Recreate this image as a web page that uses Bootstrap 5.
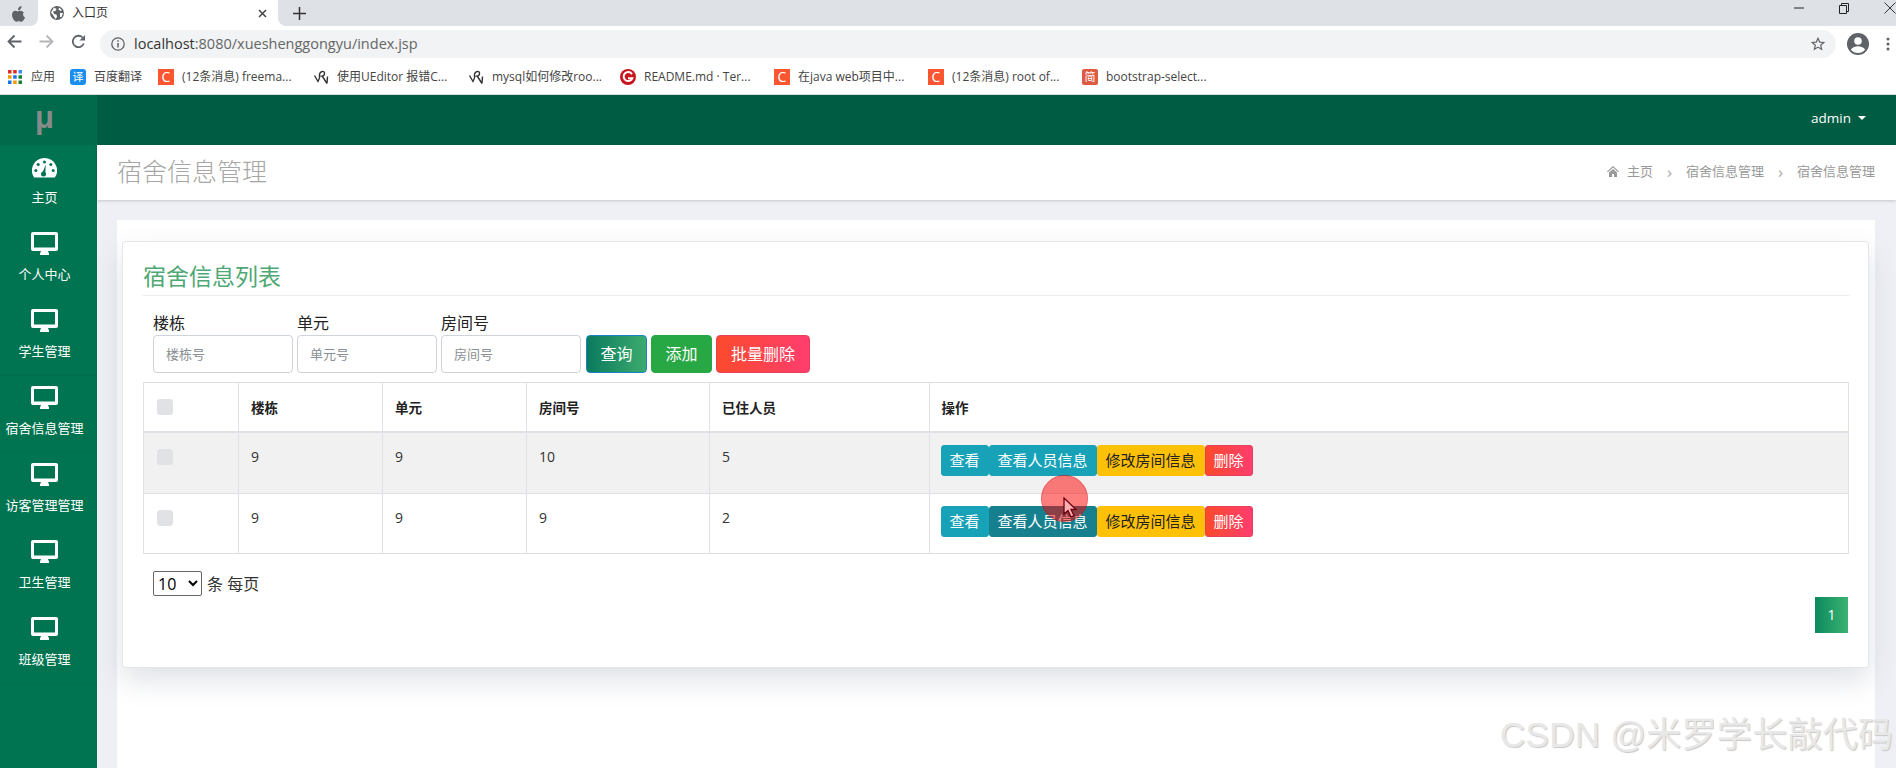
<!DOCTYPE html>
<html lang="zh"><head><meta charset="utf-8"><title>入口页</title>
<link href="https://cdn.jsdelivr.net/npm/bootstrap@5.3.0/dist/css/bootstrap.min.css" rel="stylesheet">
<style>
html,body{height:768px;overflow:hidden;}
body{font-family:"Open Sans","Noto Sans CJK SC",sans-serif;font-size:14px;color:#222;background:#fff;position:relative;width:1896px;}
.tabstrip{height:26px;background:#fff;}
.pinned{width:38px;background:#dee1e6;border-bottom-right-radius:8px;padding:2px 0 0 11px;}
.chrome-tab{width:240px;padding-left:12px;font-size:12px;color:#333;border-radius:8px 8px 0 0;}
.tab-rest{background:#dee1e6;border-bottom-left-radius:8px;padding-left:15px;}
.tab-title{margin-left:8px;width:186px;}
.winbtns{gap:35px;padding-right:0;margin-top:-10px;}
.toolbar{height:32px;padding-top:4px;}
.navicons{width:100px;padding:4px 0 0 7px;gap:17px;height:28px;}
.addr{width:1736px;height:28px;background:#f1f3f4;border-radius:14px;padding:0 11px 0 11px;font-size:14.5px;color:#666;}
.addr b{font-weight:400;color:#333;}
.addr-url{margin-left:9px;flex-grow:1;}
.tool-right{padding-left:11px;gap:17px;}
.bookbar{height:37px;padding-top:2px;border-bottom:1px solid #d6dcd9;display:grid;grid-template-columns:63px 88px 155px 155px 152px 154px 154px 154px auto;padding-left:7px;align-items:center;font-size:12px;color:#444;}
.bm{gap:8px;white-space:nowrap;}
.fav{width:16px;height:16px;color:#fff;font-size:11px;line-height:16px;text-align:center;flex:none;}
.fav-c{background:#fc5531;font-size:14px;}
.fav-y{background:#1a8df0;border-radius:3px;}
.fav-j{background:#dd5a43;border-radius:2px;}
.appheader{height:50px;background:#005c43;}
.logo-box{width:97px;padding-right:8px;background:#006a4b;color:#858c89;font-size:31px;font-weight:700;line-height:46px;text-align:center;font-family:"Liberation Sans",sans-serif;}
.admin{margin-left:auto;padding:0 30px 4px 0;color:#fff;font-size:13.5px;gap:7px;}
.caret-down{border-top:4px solid #fff;border-left:4px solid transparent;border-right:4px solid transparent;}
.workspace{height:623px;}
.sidebar{width:97px;background:#007450;flex:none;}
.side-item{height:77px;border-bottom:1px solid #006f4a;color:#fff;font-size:13px;text-align:center;padding:10px 8px 0 0;white-space:nowrap;}
.side-item svg{display:block;margin:0 auto;}
.side-item .side-label{display:block;line-height:20px;margin-top:9px;}
.side-home{padding-top:13px;}
.side-home .side-label{margin-top:9px;}
.mainarea{background:#eef0f5;flex-grow:1;min-width:0;}
.titlebar{height:55px;background:#fff;box-shadow:0 1px 3px rgba(0,0,0,.18);padding:0 21px 2px 20px;}
.pagetitle{font-size:25px;color:#a6a6a6;font-weight:300;margin:0;line-height:1;}
.crumbs{font-size:13px;color:#999;margin-left:auto;gap:0;}
.crumbs .sep{width:33px;text-align:center;color:#aaa;font-size:17px;line-height:1;}
.panel-wrap{margin:20px 21px 0 20px;background:#fff;padding:21px 6px 0 5px;height:548px;}
.listcard{border:1px solid #e4e6e8;border-radius:3px;box-shadow:0 12px 28px rgba(90,105,130,.2);padding:0 19px 34px 20px;height:427px;}
.listtitle{font-size:23px;line-height:30px;color:#4ea874;margin:19px 0 0;padding-bottom:4px;border-bottom:1px solid #e9ecef;font-weight:400;}
.filter{margin:16px 0 9px 10px;gap:4px;}
.fieldbox{width:140px;}
.fieldbox label{display:block;font-size:16px;line-height:24px;color:#222;margin:-1px 0 0;}
.fieldbox input{height:38px;font-size:13px;border-radius:4px;border-color:#ced4da;padding:0 12px;}
.fieldbox input::placeholder{color:#8a8f94;}
.btn-query{height:38px;width:61px;margin-left:1px;padding:0;font-size:16px;color:#fff;border:1px solid #1a82c4;border-radius:4px;background:linear-gradient(90deg,#0b7a5e,#3cab6f);}
.btn-add{height:38px;width:61px;padding:0;font-size:16px;border-radius:4px;background:#28a745;border-color:#28a745;color:#fff;}
.btn-hot{color:#fff;border:1px solid #e9405a;background:linear-gradient(90deg,#fb4a2c,#ff3d6e);}
.btn-batch{height:38px;width:94px;padding:0;font-size:16px;border-radius:4px;}
.gridtable{table-layout:fixed;width:1706px;margin:0;font-size:14px;border-color:#dee2e6;}
.gridtable th,.gridtable td{padding:13px 12px 0 12px;}
.gridtable th{height:49px;vertical-align:bottom;padding-bottom:12px;font-weight:700;color:#222;border-bottom:2px solid #dee2e6;font-size:13.5px;}
.gridtable td{height:61px;vertical-align:top;color:#333;line-height:21px;}
.gridtable .chk-cell{padding:16px 0 0 13px;vertical-align:top;line-height:0;}
.gridtable tr.row-shade td{background:#f1f1f1;height:62px;}
.gridtable tbody tr:last-child td{height:60px;}
.gridtable td.act-cell{padding:12px 12px 0 11px;}
.c1{width:95px}.c2,.c3{width:144px}.c4{width:183px}.c5{width:219.5px}
.fakechk{width:16px;height:16px;margin:0;background-color:#e0e2e5;border:0;border-radius:4px;opacity:1!important;}
.act{height:31px;padding:0 8px;font-size:15px;line-height:29px;border-radius:3px;font-weight:400;white-space:nowrap;}
.act-view{background:#17a2b8;border-color:#17a2b8;color:#fff;}
.act-dark{background:#17808f;border-color:#17808f;color:#fff;}
.act-edit{background:#ffc107;border-color:#ffc107;color:#222;}
.page-size{margin:17px 0 0 10px;font-size:16px;height:25px;gap:5px;color:#333;}
.page-size select{width:49px;height:25px;font-size:16px;padding:0;background:#fff;border:1px solid #666;border-radius:2px;}
.pager{margin:1px 1px 0 0;}
.pager .page-item .page-link{width:33px;height:36px;padding:0;line-height:36px;text-align:center;color:#fff;font-size:14px;border:0;border-radius:0;background:linear-gradient(90deg,#0b8a5e,#3cb371);}
.click-dot{position:absolute;left:1041px;top:475px;width:47px;height:47px;border-radius:50%;background:rgba(255,0,0,.5);border:1px solid rgba(190,0,0,.25);}
.click-arrow{position:absolute;left:1063px;top:497px;}
.watermark{position:absolute;left:1500px;top:711px;font-family:"Liberation Sans","Noto Sans CJK SC",sans-serif;font-size:35px;line-height:48px;color:#e8e8e8;text-shadow:1px 1px 1px #c8c8c8;white-space:nowrap;letter-spacing:.3px;}
</style></head><body>
<div class="d-flex tabstrip">
  <div class="pinned"><svg width="15" height="17" viewBox="0 0 15 17"><path fill="#5f6368" d="M10.6 0c.1 1.200-.4 2.200-1 2.900-.7.800-1.600 1.300-2.600 1.200C6.900 3 7.400 2 8 1.300 8.600.6 9.700.1 10.600 0zM13.700 5.700c-1 .6-1.600 1.500-1.600 2.700 0 1.300.8 2.400 2 2.900-.4 1.100-.9 2.100-1.600 3-.7.900-1.300 1.500-2.200 1.500-.9 0-1.300-.6-2.500-.6s-1.700.6-2.500.6c-.9 0-1.600-.7-2.300-1.700C1.800 12.700 1 10.600 1 8.800c0-2.600 1.700-4 3.300-4 .9 0 1.800.6 2.300.6.600 0 1.600-.7 2.700-.7 1.200 0 2.300.5 3 1.500z"/></svg></div>
  <div class="chrome-tab d-flex align-items-center">
    <svg width="14" height="14" viewBox="0 0 14 14"><circle cx="7" cy="7" r="7" fill="#5f6368"/><path fill="#fff" d="M4 1.500 6.500 3 5.500 5 3 5.500 4 8l2.500.5L7 11l-1.500 2L3 9 1 6.500zM9 1.500l3 2.500-1.500 1-2-1.500zM10 7l3 0-1.500 4-1.500 0z"/></svg>
    <span class="tab-title">入口页</span>
    <svg width="9" height="9" viewBox="0 0 9 9"><path d="M1 1l7 7M8 1 1 8" stroke="#444" stroke-width="1.500"/></svg>
  </div>
  <div class="tab-rest flex-grow-1 d-flex align-items-center justify-content-between">
    <svg width="13" height="13" viewBox="0 0 13 13"><path d="M6.500 0v13M0 6.500h13" stroke="#333" stroke-width="1.500"/></svg>
    <div class="d-flex align-items-center winbtns">
      <svg width="10" height="2" viewBox="0 0 10 2"><path d="M0 1h10" stroke="#222"/></svg>
      <svg width="10" height="11" viewBox="0 0 10 11"><path d="M.5 2.500h7v8h-7zM2.500 2.500v-2h7v8h-2" fill="none" stroke="#222"/></svg>
      <svg width="12" height="12" viewBox="0 0 12 12"><path d="M.5.5l11 11M11.500.5l-11 11" stroke="#333"/></svg>
    </div>
  </div>
</div>
<div class="d-flex toolbar">
  <div class="d-flex navicons">
    <svg width="15" height="15" viewBox="0 0 15 15"><path d="M14.500 7.500H2M7.500 1.500l-6 6 6 6" fill="none" stroke="#5f6368" stroke-width="1.800"/></svg>
    <svg width="15" height="15" viewBox="0 0 15 15"><path d="M.5 7.500H13M7.500 1.500l6 6-6 6" fill="none" stroke="#b4b6b9" stroke-width="1.800"/></svg>
    <svg width="15" height="15" viewBox="0 0 15 15"><path d="M12.800 9.500A5.700 5.700 0 1 1 11.600 3.500" fill="none" stroke="#5f6368" stroke-width="1.800"/><path d="M14 1v5.500H8.500z" fill="#5f6368"/></svg>
  </div>
  <div class="addr d-flex align-items-center">
    <svg width="14" height="14" viewBox="0 0 14 14"><circle cx="7" cy="7" r="6.200" fill="none" stroke="#5f6368" stroke-width="1.300"/><path d="M7 6v4.500M7 3.200v1.600" stroke="#5f6368" stroke-width="1.500"/></svg>
    <span class="addr-url"><b>localhost</b>:8080/xueshenggongyu/index.jsp</span>
    <svg width="14" height="14" viewBox="0 0 14 14"><path d="M7 1.300l1.700 3.800 4.100.4-3.100 2.700.9 4-3.600-2.100-3.600 2.100.9-4L1.200 5.500l4.100-.4z" fill="none" stroke="#5f6368" stroke-width="1.200"/></svg>
  </div>
  <div class="d-flex tool-right align-items-center">
    <svg width="22" height="22" viewBox="0 0 22 22"><circle cx="11" cy="11" r="11" fill="#5f6368"/><circle cx="11" cy="8" r="3.800" fill="#fff"/><path d="M3.800 16.500c2-2.500 4.500-3.200 7.200-3.200s5.200.7 7.200 3.200c-1.800 2.300-4.400 3.600-7.200 3.600s-5.400-1.300-7.200-3.600z" fill="#fff"/></svg>
    <svg width="4" height="14" viewBox="0 0 4 14"><g fill="#5f6368"><circle cx="2" cy="2" r="1.500"/><circle cx="2" cy="7" r="1.500"/><circle cx="2" cy="12" r="1.500"/></g></svg>
  </div>
</div>
<div class="bookbar">
  <div class="bm d-flex align-items-center"><svg class="fav" viewBox="0 0 16 16"><g><rect x="1" y="1" width="3.500" height="3.500" fill="#d93025"/><rect x="6.200" y="1" width="3.500" height="3.500" fill="#d93025"/><rect x="11.500" y="1" width="3.500" height="3.500" fill="#4285f4"/><rect x="1" y="6.200" width="3.500" height="3.500" fill="#f29900"/><rect x="6.200" y="6.200" width="3.500" height="3.500" fill="#1a73e8"/><rect x="11.500" y="6.200" width="3.500" height="3.500" fill="#188038"/><rect x="1" y="11.500" width="3.500" height="3.500" fill="#1a73e8"/><rect x="6.200" y="11.500" width="3.500" height="3.500" fill="#f29900"/><rect x="11.500" y="11.500" width="3.500" height="3.500" fill="#188038"/></g></svg><span>应用</span></div>
  <div class="bm d-flex align-items-center"><span class="fav fav-y">译</span><span>百度翻译</span></div>
  <div class="bm d-flex align-items-center"><span class="fav fav-c">C</span><span>(12条消息) freema...</span></div>
  <div class="bm d-flex align-items-center"><svg class="fav" viewBox="0 0 16 16"><path d="M1.500 6.500 5 12.500c1.500-2.500 2-5 1.500-7.500C7.500 2 11 1.500 11.500 4c.4 2.500-2 3.800-4 2.800M9.500 7.500l4.500 7M14 14.500l.5-7" fill="none" stroke="#333" stroke-width="1.400"/></svg><span>使用UEditor 报错C...</span></div>
  <div class="bm d-flex align-items-center"><svg class="fav" viewBox="0 0 16 16"><path d="M1.500 6.500 5 12.500c1.500-2.500 2-5 1.500-7.500C7.500 2 11 1.500 11.500 4c.4 2.500-2 3.800-4 2.800M9.500 7.500l4.500 7M14 14.500l.5-7" fill="none" stroke="#333" stroke-width="1.400"/></svg><span>mysql如何修改roo...</span></div>
  <div class="bm d-flex align-items-center"><svg class="fav" viewBox="0 0 16 16"><circle cx="8" cy="8" r="8" fill="#c7161e"/><path d="M12 5.200A4.500 4.500 0 1 0 12.300 9.300H8" fill="none" stroke="#fff" stroke-width="2"/></svg><span>README.md · Ter...</span></div>
  <div class="bm d-flex align-items-center"><span class="fav fav-c">C</span><span>在java web项目中...</span></div>
  <div class="bm d-flex align-items-center"><span class="fav fav-c">C</span><span>(12条消息) root of...</span></div>
  <div class="bm d-flex align-items-center"><span class="fav fav-j">简</span><span>bootstrap-select...</span></div>
</div>
<div class="d-flex appheader">
  <div class="logo-box">μ</div>
  <div class="admin d-flex align-items-center"><span>admin</span><span class="caret-down"></span></div>
</div>
<div class="d-flex workspace">
  <nav class="sidebar">
    <div class="side-item side-home"><svg width="25" height="20" viewBox="0 0 25 20"><path fill="#fff" d="M12.500 0A12.500 12.500 0 0 0 2.200 19.600h20.600A12.500 12.500 0 0 0 12.500 0z"/><g fill="#007450"><circle cx="12.500" cy="4" r="1.500"/><circle cx="6.200" cy="6.500" r="1.500"/><circle cx="18.800" cy="6.500" r="1.500"/><circle cx="3.800" cy="12.500" r="1.500"/><circle cx="21.200" cy="12.500" r="1.500"/><circle cx="11.500" cy="16" r="2.500"/><path d="M10.300 15 13.800 6.500 13.200 16z"/></g></svg><span class="side-label">主页</span></div>
    <div class="side-item"><svg width="27" height="23" viewBox="0 0 27 23"><path fill="#fff" fill-rule="evenodd" d="M2 0h23a2 2 0 0 1 2 2v15a2 2 0 0 1-2 2h-8l1 2.500v1.500H9v-1.500l1-2.500H2a2 2 0 0 1-2-2V2a2 2 0 0 1 2-2zM3 3v12.500h21V3z"/></svg><span class="side-label">个人中心</span></div>
    <div class="side-item"><svg width="27" height="23" viewBox="0 0 27 23"><path fill="#fff" fill-rule="evenodd" d="M2 0h23a2 2 0 0 1 2 2v15a2 2 0 0 1-2 2h-8l1 2.500v1.500H9v-1.500l1-2.500H2a2 2 0 0 1-2-2V2a2 2 0 0 1 2-2zM3 3v12.500h21V3z"/></svg><span class="side-label">学生管理</span></div>
    <div class="side-item"><svg width="27" height="23" viewBox="0 0 27 23"><path fill="#fff" fill-rule="evenodd" d="M2 0h23a2 2 0 0 1 2 2v15a2 2 0 0 1-2 2h-8l1 2.500v1.500H9v-1.500l1-2.500H2a2 2 0 0 1-2-2V2a2 2 0 0 1 2-2zM3 3v12.500h21V3z"/></svg><span class="side-label">宿舍信息管理</span></div>
    <div class="side-item"><svg width="27" height="23" viewBox="0 0 27 23"><path fill="#fff" fill-rule="evenodd" d="M2 0h23a2 2 0 0 1 2 2v15a2 2 0 0 1-2 2h-8l1 2.500v1.500H9v-1.500l1-2.500H2a2 2 0 0 1-2-2V2a2 2 0 0 1 2-2zM3 3v12.500h21V3z"/></svg><span class="side-label">访客管理管理</span></div>
    <div class="side-item"><svg width="27" height="23" viewBox="0 0 27 23"><path fill="#fff" fill-rule="evenodd" d="M2 0h23a2 2 0 0 1 2 2v15a2 2 0 0 1-2 2h-8l1 2.500v1.500H9v-1.500l1-2.500H2a2 2 0 0 1-2-2V2a2 2 0 0 1 2-2zM3 3v12.500h21V3z"/></svg><span class="side-label">卫生管理</span></div>
    <div class="side-item"><svg width="27" height="23" viewBox="0 0 27 23"><path fill="#fff" fill-rule="evenodd" d="M2 0h23a2 2 0 0 1 2 2v15a2 2 0 0 1-2 2h-8l1 2.500v1.500H9v-1.500l1-2.500H2a2 2 0 0 1-2-2V2a2 2 0 0 1 2-2zM3 3v12.500h21V3z"/></svg><span class="side-label">班级管理</span></div>
  </nav>
  <main class="mainarea">
    <div class="titlebar d-flex align-items-center">
      <h1 class="pagetitle">宿舍信息管理</h1>
      <div class="crumbs d-flex align-items-center">
        <svg width="12" height="11" viewBox="0 0 12 11" class="me-2"><path fill="#999" d="M6 0l6 5.500-.8.8L6 1.600.8 6.300 0 5.500zM2 6.500 6 3l4 3.500V11H7V8H5v3H2z"/></svg>
        <span>主页</span><span class="sep">›</span><span>宿舍信息管理</span><span class="sep">›</span><span>宿舍信息管理</span>
      </div>
    </div>
    <div class="panel-wrap">
      <div class="card listcard">
        <h2 class="listtitle">宿舍信息列表</h2>
        <form class="filter d-flex align-items-end">
          <div class="fieldbox"><label>楼栋</label><input class="form-control" placeholder="楼栋号"></div>
          <div class="fieldbox"><label>单元</label><input class="form-control" placeholder="单元号"></div>
          <div class="fieldbox"><label>房间号</label><input class="form-control" placeholder="房间号"></div>
          <button type="button" class="btn btn-query">查询</button>
          <button type="button" class="btn btn-add">添加</button>
          <button type="button" class="btn btn-hot btn-batch">批量删除</button>
        </form>
        <table class="table table-bordered gridtable">
          <colgroup><col class="c1"><col class="c2"><col class="c3"><col class="c4"><col class="c5"><col></colgroup>
          <thead><tr><th class="chk-cell"><input type="checkbox" class="form-check-input fakechk" disabled></th><th>楼栋</th><th>单元</th><th>房间号</th><th>已住人员</th><th>操作</th></tr></thead>
          <tbody>
            <tr class="row-shade"><td class="chk-cell"><input type="checkbox" class="form-check-input fakechk" disabled></td><td>9</td><td>9</td><td>10</td><td>5</td><td class="act-cell"><div class="d-flex"><button class="btn act act-view">查看</button><button class="btn act act-view">查看人员信息</button><button class="btn act act-edit">修改房间信息</button><button class="btn act btn-hot">删除</button></div></td></tr>
            <tr><td class="chk-cell"><input type="checkbox" class="form-check-input fakechk" disabled></td><td>9</td><td>9</td><td>9</td><td>2</td><td class="act-cell"><div class="d-flex"><button class="btn act act-view">查看</button><button class="btn act act-dark">查看人员信息</button><button class="btn act act-edit">修改房间信息</button><button class="btn act btn-hot">删除</button></div></td></tr>
          </tbody>
        </table>
        <div class="page-size d-flex align-items-center"><select><option>10</option></select><span>条 每页</span></div>
        <ul class="pagination justify-content-end pager"><li class="page-item"><a class="page-link" href="#">1</a></li></ul>
      </div>
    </div>
  </main>
</div>
<div class="click-dot"></div>
<svg class="click-arrow" width="15" height="22" viewBox="0 0 15 22"><path d="M1 1v16l4-3.500 3 6.500 3-1.500-3-6h5z" fill="#ffb0b0" stroke="#700010" stroke-width="1.300"/></svg>
<div class="watermark">CSDN @米罗学长敲代码</div>
<script src="https://cdn.jsdelivr.net/npm/bootstrap@5.3.0/dist/js/bootstrap.bundle.min.js"></script>
</body></html>
